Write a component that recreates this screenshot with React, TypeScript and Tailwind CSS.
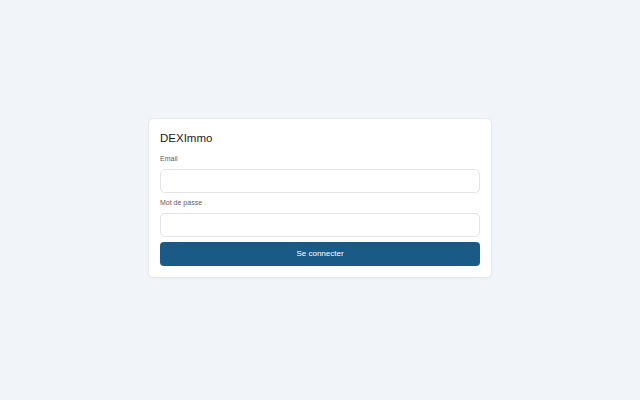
import React from 'react';

export default function App() {
  return (
    <div className="flex min-h-[400px] w-full items-center justify-center bg-[#f1f4f8] pb-[4px] font-['Liberation_Sans',Arial,sans-serif]">
      <div className="w-[344px] rounded-[5px] border border-[#e6e9ee] bg-white px-[11px] pb-[11px] pt-[11px] shadow-[0_1px_2px_rgba(0,0,0,0.04)]">
        <h1 className="text-[11.5px] leading-[16px] text-[#1a1a1a]">DEXImmo</h1>
        <form className="mt-[7px] flex flex-col" onSubmit={(e) => e.preventDefault()}>
          <label className="text-[7px] leading-[11px] text-[#5b6068]">Email</label>
          <input
            type="email"
            className="mt-[5px] h-[24px] w-full rounded-[5px] border border-[#e1e4e9] bg-white px-2 text-[8px] outline-none"
          />
          <label className="mt-[4px] text-[7px] leading-[11px] text-[#5b6068]">Mot de passe</label>
          <input
            type="password"
            className="mt-[5px] h-[24px] w-full rounded-[5px] border border-[#e1e4e9] bg-white px-2 text-[8px] outline-none"
          />
          <button
            type="submit"
            className="mt-[5px] h-[24px] w-full rounded-[4px] bg-[#1a5a86] text-[8px] text-white"
          >
            Se connecter
          </button>
        </form>
      </div>
    </div>
  );
}
